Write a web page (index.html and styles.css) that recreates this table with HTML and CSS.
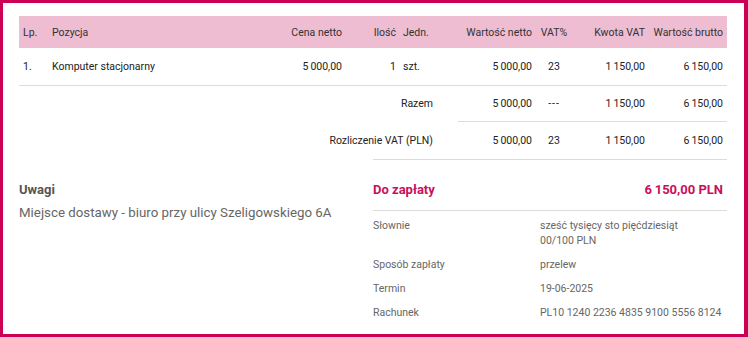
FILE: index.html
```html
<!DOCTYPE html>
<html lang="pl">
<head>
<meta charset="utf-8">
<link rel="stylesheet" href="styles.css">
</head>
<body>
<div class="frame">
  <table class="items">
    <colgroup>
      <col class="c-lp"><col class="c-poz"><col class="c-cena"><col class="c-ilosc"><col class="c-jedn">
      <col class="c-netto"><col class="c-vat"><col class="c-kwota"><col class="c-brutto">
    </colgroup>
    <thead>
      <tr>
        <th class="lp">Lp.</th>
        <th class="poz">Pozycja</th>
        <th class="num">Cena netto</th>
        <th class="ilosc">Ilość</th>
        <th class="jedn">Jedn.</th>
        <th class="num">Wartość netto</th>
        <th class="vat">VAT%</th>
        <th class="num">Kwota VAT</th>
        <th class="num">Wartość brutto</th>
      </tr>
    </thead>
    <tbody>
      <tr class="item">
        <td class="lp">1.</td>
        <td class="poz">Komputer stacjonarny</td>
        <td class="num">5&thinsp;000,00</td>
        <td class="ilosc">1</td>
        <td class="jedn">szt.</td>
        <td class="num">5&thinsp;000,00</td>
        <td class="vat">23</td>
        <td class="num">1&thinsp;150,00</td>
        <td class="num">6&thinsp;150,00</td>
      </tr>
      <tr class="sum razem">
        <td class="label" colspan="5">Razem</td>
        <td class="num ruled">5&thinsp;000,00</td>
        <td class="vat ruled dashes">---</td>
        <td class="num ruled">1&thinsp;150,00</td>
        <td class="num ruled">6&thinsp;150,00</td>
      </tr>
      <tr class="sum rozl">
        <td class="label" colspan="5">Rozliczenie VAT (PLN)</td>
        <td class="num">5&thinsp;000,00</td>
        <td class="vat">23</td>
        <td class="num">1&thinsp;150,00</td>
        <td class="num">6&thinsp;150,00</td>
      </tr>
    </tbody>
  </table>

  <div class="bottom">
    <div class="notes">
      <div class="notes-title">Uwagi</div>
      <div class="notes-text">Miejsce dostawy - biuro przy ulicy Szeligowskiego 6A</div>
    </div>
    <div class="summary">
      <div class="topay">
        <span>Do zapłaty</span>
        <span class="nowrap">6&thinsp;150,00 PLN</span>
      </div>
      <div class="details">
        <div class="dl">Słownie</div>
        <div class="dv">sześć tysięcy sto pięćdziesiąt<br>00/100 PLN</div>
        <div class="dl">Sposób zapłaty</div>
        <div class="dv">przelew</div>
        <div class="dl">Termin</div>
        <div class="dv">19-06-2025</div>
        <div class="dl">Rachunek</div>
        <div class="dv">PL10 1240 2236 4835 9100 5556 8124</div>
      </div>
    </div>
  </div>
</div>
</body>
</html>
```

FILE: styles.css
```css
* { box-sizing: border-box; }
html, body { margin: 0; padding: 0; background: #fff; }
body {
  font-family: Roboto, "Liberation Sans", sans-serif;
  font-size: 10.5px;
  color: #222;
}
.frame {
  width: 748px;
  height: 337px;
  border: 3px solid #cc0055;
  border-right-width: 4px;
  padding: 13px 17px 0 16px;
  overflow: hidden;
}
.items {
  width: 708px;
  border-collapse: collapse;
  table-layout: fixed;
}
.c-lp { width: 29px; }
.c-poz { width: 222px; }
.c-cena { width: 76px; }
.c-ilosc { width: 54px; }
.c-jedn { width: 58px; }
.c-netto { width: 78px; }
.c-vat { width: 36px; }
.c-kwota { width: 77px; }
.c-brutto { width: 78px; }

.items th, .items td {
  padding: 0 4px;
  font-weight: 400;
  white-space: nowrap;
  line-height: 15px;
}
.items thead tr { background: #eebdd2; height: 32px; }
.items th { color: #333; }
.items .lp, .items .poz { text-align: left; }
.items .jedn { text-align: left; padding-left: 3px; }
.items .num { text-align: right; }
.items .ilosc { text-align: right; padding-right: 4px; }
.items .vat { text-align: center; padding: 0; }
.items .dashes { letter-spacing: 1px; }
.items .label { text-align: right; padding-right: 25px; }

.items tr.item { height: 37px; }
.items tr.item td { border-bottom: 1px solid #dcdcdc; }
.items tr.razem { height: 36px; }
.items tr.rozl { height: 38px; }
.items td.ruled { border-bottom: 1px solid #dcdcdc; }

.bottom {
  display: flex;
  justify-content: space-between;
}
.notes {
  padding: 23px 0 0 0;
}
.notes-title {
  font-size: 13px;
  line-height: 16px;
  font-weight: 700;
  color: #555;
}
.notes-text {
  margin-top: 7px;
  font-size: 13.3px;
  line-height: 16px;
  color: #666;
}
.summary {
  width: 354px;
  border-top: 1px solid #dcdcdc;
}
.topay {
  display: flex;
  justify-content: space-between;
  padding: 22px 4px 12px 0;
  line-height: 16px;
  font-size: 13px;
  font-weight: 700;
  color: #c8105a;
  border-bottom: 1px solid #dcdcdc;
}
.nowrap { white-space: nowrap; }
.details {
  display: grid;
  grid-template-columns: 167px 1fr;
  row-gap: 9px;
  margin-top: 7px;
  line-height: 15px;
  color: #666;
}
.dv { white-space: nowrap; }
```
